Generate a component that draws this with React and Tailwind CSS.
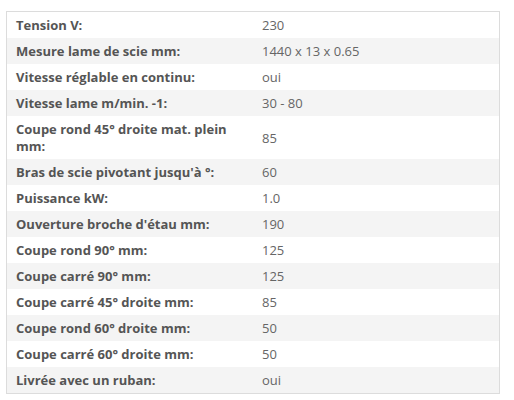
const rows = [
  ["Tension V:", "230"],
  ["Mesure lame de scie mm:", "1440 x 13 x 0.65"],
  ["Vitesse réglable en continu:", "oui"],
  ["Vitesse lame m/min. -1:", "30 - 80"],
  ["Coupe rond 45° droite mat. plein mm:", "85"],
  ["Bras de scie pivotant jusqu'à °:", "60"],
  ["Puissance kW:", "1.0"],
  ["Ouverture broche d'étau mm:", "190"],
  ["Coupe rond 90° mm:", "125"],
  ["Coupe carré 90° mm:", "125"],
  ["Coupe carré 45° droite mm:", "85"],
  ["Coupe rond 60° droite mm:", "50"],
  ["Coupe carré 60° droite mm:", "50"],
  ["Livrée avec un ruban:", "oui"],
];

export default function App() {
  return (
    <div className="w-[514px] h-[400px] bg-white pt-[11px] pl-[6px]" style={{ fontFamily: '"Open Sans", sans-serif' }}>
      <div className="w-[494px] border border-[#dcdcdc]">
        {rows.map(([k, v], i) => (
          <div key={i} className={`flex ${i % 2 === 1 ? "bg-[#f4f4f4]" : "bg-white"}`}>
            <div className="w-[246px] pl-[9px] pr-[6px] pt-[5px] pb-[4px] text-[13px] leading-[17px] font-bold text-[#555]">{k}</div>
            <div className="flex-1 pl-[9px] pt-[5px] pb-[4px] text-[13px] leading-[17px] text-[#666] flex items-center">{v}</div>
          </div>
        ))}
      </div>
    </div>
  );
}
